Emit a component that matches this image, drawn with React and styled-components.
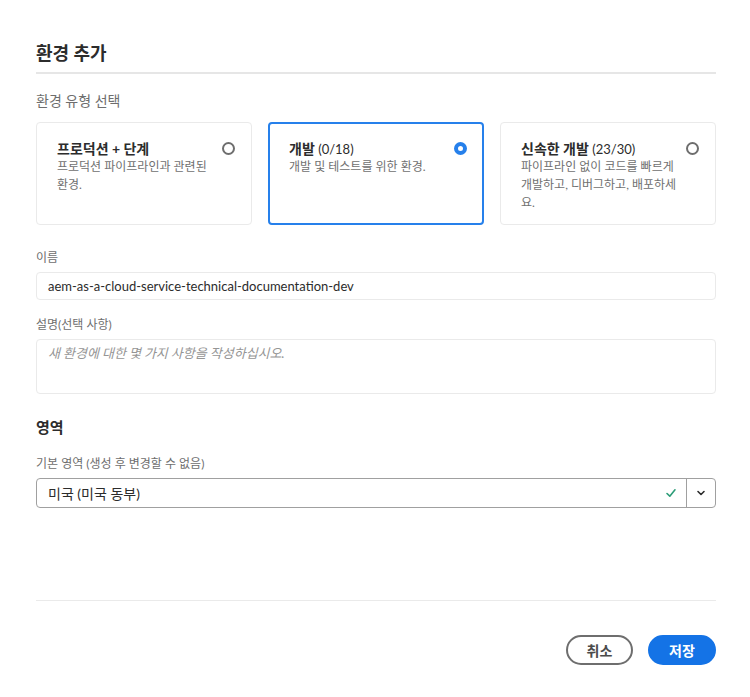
import React, { useState } from 'react';
import styled, { createGlobalStyle } from 'styled-components';

const GlobalStyle = createGlobalStyle`
  body {
    margin: 0;
    background: #ffffff;
    font-family: Lato, "Noto Sans CJK KR", sans-serif;
    color: #2c2c2c;
  }
`;

const types = [
  { id: 'prod', title: '프로덕션 + 단계', count: '', desc: '프로덕션 파이프라인과 관련된 환경.' },
  { id: 'dev', title: '개발', count: '(0/18)', desc: '개발 및 테스트를 위한 환경.' },
  { id: 'rde', title: '신속한 개발', count: '(23/30)', desc: '파이프라인 없이 코드를 빠르게 개발하고, 디버그하고, 배포하세요.' },
];

export default function App() {
  const [selected, setSelected] = useState('dev');

  return (
    <>
      <GlobalStyle />
      <Dialog>
        <Title>환경 추가</Title>
        <Divider />

        <SectionLabel>환경 유형 선택</SectionLabel>
        <CardGrid>
          {types.map((t) => (
            <Card key={t.id} $active={selected === t.id} onClick={() => setSelected(t.id)}>
              <CardText>
                <CardTitle>
                  {t.title} {t.count && <Count>{t.count}</Count>}
                </CardTitle>
                <CardDesc>{t.desc}</CardDesc>
              </CardText>
              <Radio $active={selected === t.id} />
            </Card>
          ))}
        </CardGrid>

        <FieldLabel $top={25}>이름</FieldLabel>
        <TextInput>aem-as-a-cloud-service-technical-documentation-dev</TextInput>

        <FieldLabel $top={17}>설명(선택 사항)</FieldLabel>
        <TextArea>새 환경에 대한 몇 가지 사항을 작성하십시오.</TextArea>

        <Heading>영역</Heading>
        <FieldLabel $top={19}>기본 영역 (생성 후 변경할 수 없음)</FieldLabel>
        <Select>
          <SelectValue>미국 (미국 동부)</SelectValue>
          <CheckIcon viewBox="0 0 12 12">
            <path d="M2 6.5 L4.8 9.2 L10 2.8" fill="none" stroke="#2d9d78" strokeWidth="1.6" strokeLinecap="round" strokeLinejoin="round" />
          </CheckIcon>
          <SelectButton>
            <svg width="10" height="10" viewBox="0 0 10 10">
              <path d="M2 3.5 L5 6.5 L8 3.5" fill="none" stroke="#2c2c2c" strokeWidth="1.6" strokeLinecap="round" strokeLinejoin="round" />
            </svg>
          </SelectButton>
        </Select>

        <Footer>
          <Button>취소</Button>
          <Button $primary>저장</Button>
        </Footer>
      </Dialog>
    </>
  );
}

const Dialog = styled.div`
  width: 680px;
  padding: 42px 34px 0 36px;
  display: flex;
  flex-direction: column;
`;

const Title = styled.h2`
  margin: 0;
  font-size: 18px;
  line-height: 22px;
  font-weight: 700;
  color: #2c2c2c;
`;

const Divider = styled.div`
  height: 2px;
  background: #e6e6e6;
  margin-top: 8px;
`;

const SectionLabel = styled.div`
  margin-top: 17px;
  font-size: 14px;
  line-height: 20px;
  color: #6e6e6e;
`;

const CardGrid = styled.div`
  margin-top: 11px;
  display: grid;
  grid-template-columns: repeat(3, 1fr);
  gap: 16px;
`;

const Card = styled.div`
  box-sizing: border-box;
  height: 103px;
  display: flex;
  justify-content: space-between;
  align-items: flex-start;
  border: ${(p) => (p.$active ? '2px solid #2680eb' : '1px solid #eaeaea')};
  border-radius: 4px;
  padding: ${(p) => (p.$active ? '16px 15px 0 19px' : '17px 16px 0 20px')};
  cursor: pointer;
`;

const CardText = styled.div`
  display: flex;
  flex-direction: column;
  max-width: 162px;
`;

const CardTitle = styled.div`
  font-size: 14px;
  line-height: 18px;
  font-weight: 700;
  color: #2c2c2c;
`;

const Count = styled.span`
  font-weight: 400;
  font-size: 13px;
`;

const CardDesc = styled.div`
  font-size: 12px;
  line-height: 18px;
  color: #707070;
  word-break: break-all;
`;

const Radio = styled.span`
  flex: none;
  box-sizing: border-box;
  width: 13px;
  height: 13px;
  margin-top: 2px;
  border-radius: 50%;
  border: ${(p) => (p.$active ? '4px solid #2680eb' : '2px solid #6e6e6e')};
  background: #fff;
`;

const FieldLabel = styled.div`
  margin-top: ${(p) => p.$top}px;
  margin-bottom: 6px;
  font-size: 12px;
  line-height: 16px;
  color: #6e6e6e;
`;

const TextInput = styled.div`
  box-sizing: border-box;
  height: 28px;
  padding: 0 11px;
  border: 1px solid #eaeaea;
  border-radius: 4px;
  display: flex;
  align-items: center;
  font-size: 13px;
  color: #2c2c2c;
`;

const TextArea = styled.div`
  box-sizing: border-box;
  height: 55px;
  padding: 3px 11px;
  border: 1px solid #eaeaea;
  border-radius: 4px;
  font-size: 13px;
  line-height: 20px;
  font-style: italic;
  color: #959595;
`;

const Heading = styled.div`
  margin-top: 23px;
  font-size: 15px;
  line-height: 20px;
  font-weight: 700;
  color: #2c2c2c;
`;

const Select = styled.div`
  box-sizing: border-box;
  height: 30px;
  border: 1px solid #a0a0a0;
  border-radius: 4px;
  display: flex;
  align-items: center;
`;

const SelectValue = styled.div`
  flex: 1;
  padding-left: 11px;
  font-size: 14px;
  color: #2c2c2c;
`;

const CheckIcon = styled.svg`
  width: 12px;
  height: 12px;
  margin-right: 9px;
`;

const SelectButton = styled.div`
  width: 28px;
  height: 100%;
  border-left: 1px solid #a0a0a0;
  display: flex;
  align-items: center;
  justify-content: center;
`;

const Footer = styled.div`
  margin-top: 92px;
  border-top: 1px solid #eaeaea;
  padding-top: 34px;
  display: flex;
  justify-content: flex-end;
  gap: 15px;
`;

const Button = styled.button`
  box-sizing: border-box;
  height: 30px;
  min-width: ${(p) => (p.$primary ? 68 : 67)}px;
  padding: 0 16px;
  border-radius: 15px;
  font-family: inherit;
  font-size: 14px;
  font-weight: 700;
  border: 2px solid ${(p) => (p.$primary ? '#1473e6' : '#6e6e6e')};
  background: ${(p) => (p.$primary ? '#1473e6' : '#fff')};
  color: ${(p) => (p.$primary ? '#fff' : '#4b4b4b')};
`;
